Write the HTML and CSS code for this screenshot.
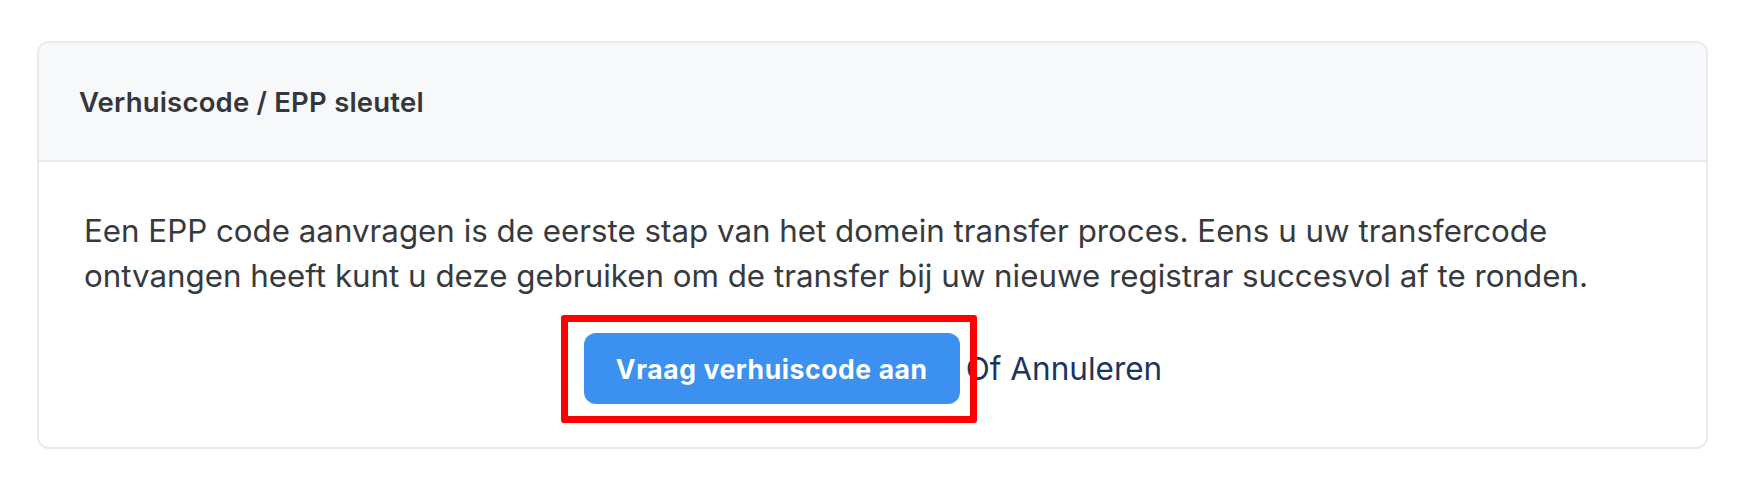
FILE: index.html
```html
<!DOCTYPE html>
<html lang="nl">
<head>
<meta charset="utf-8">
<title>Verhuiscode / EPP sleutel</title>
<link rel="stylesheet" href="styles.css">
</head>
<body>
<div class="page">
  <div class="card">
    <div class="card-header">
      <h3 class="card-title">Verhuiscode / EPP sleutel</h3>
    </div>
    <div class="card-body">
      <p class="intro">Een EPP code aanvragen is de eerste stap van het domein transfer proces. Eens u uw transfercode ontvangen heeft kunt u deze gebruiken om de transfer bij uw nieuwe registrar succesvol af te ronden.</p>
      <div class="actions">
        <span class="highlight"><button class="btn-primary" type="button">Vraag verhuiscode aan</button></span>
        <a class="cancel" href="#">Of Annuleren</a>
      </div>
    </div>
  </div>
</div>
</body>
</html>
```
FILE: styles.css
```css
html, body {
  margin: 0;
  padding: 0;
  background: #ffffff;
}
body {
  font-family: Inter, "Noto Sans", "Liberation Sans", sans-serif;
  color: #343a40;
}
.page {
  padding: 41px 31px 0 37px;
}
.card {
  border: 2px solid #e9eaef;
  border-radius: 12px;
  overflow: hidden;
  background: #ffffff;
}
.card-header {
  background: #f7f8fa;
  border-bottom: 2px solid #e9eaef;
  height: 117px;
  display: flex;
  align-items: center;
  padding: 0 40px;
}
.card-title {
  margin: 0;
  font-size: 27.5px;
  font-weight: 600;
  letter-spacing: 0.2px;
  color: #33363b;
}
.card-body {
  padding: 47px 44px 43px 45px;
}
.intro {
  margin: 0;
  font-size: 31.3px;
  line-height: 45px;
  color: #363a3f;
}
.actions {
  margin-top: 34px;
  display: flex;
  justify-content: center;
  align-items: center;
  gap: 6px;
}
.highlight {
  position: relative;
  display: inline-flex;
}
.highlight::after {
  content: "";
  position: absolute;
  left: -23px;
  right: -17px;
  top: -18px;
  bottom: -19px;
  border: 7px solid #ff0000;
  border-radius: 3px;
  pointer-events: none;
}
.btn-primary {
  font-family: inherit;
  height: 71px;
  padding: 0 32px;
  border: 0;
  border-radius: 12px;
  background: #3c90f0;
  color: #ffffff;
  font-size: 26.5px;
  font-weight: 700;
  letter-spacing: 0.6px;
  cursor: pointer;
}
.cancel {
  font-size: 31.5px;
  color: #1c3461;
  text-decoration: none;
}
```
